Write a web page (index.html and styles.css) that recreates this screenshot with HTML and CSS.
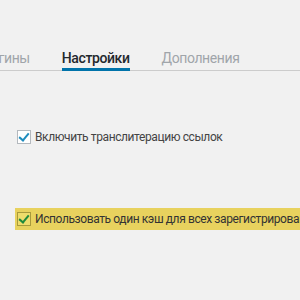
FILE: index.html
```html
<!DOCTYPE html>
<html lang="ru">
<head>
  <meta charset="UTF-8" />
  <title>Настройки</title>
  <link rel="stylesheet" href="styles.css">
</head>
<body>
  <div class="page">
    <nav class="tabs">
      <span class="tab">Плагины</span>
      <span class="tab active">Настройки</span>
      <span class="tab">Дополнения</span>
    </nav>

    <div class="options">
      <label class="option">
        <span class="check"></span>
        <span>Включить транслитерацию ссылок</span>
      </label>

      <label class="option highlight">
        <span class="check green"></span>
        <span>Использовать один кэш для всех зарегистрированных пользователей</span>
      </label>
    </div>
  </div>
</body>
</html>
```

FILE: styles.css
```css
/* --- page --- */
body {
  margin: 0;
  background-color: #f1f1f1;
  font-family: Roboto, "Noto Sans", sans-serif;
  overflow: hidden;
}

.page {
  width: 300px;
  height: 300px;
  overflow: hidden;
}

/* --- tabs --- */
.tabs {
  display: flex;
  gap: 32px;
  margin-top: 48px;
  margin-left: -26px;
  width: 400px;
  border-bottom: 1px solid #ccc;
  white-space: nowrap;
}
.tab {
  font-size: 14px;
  letter-spacing: -0.4px;
  line-height: 20px;
  color: #a0a5aa;
  border-bottom: 3px solid transparent;
  margin-bottom: -1px;
}
.tab.active {
  color: #23282d;
  font-weight: 500;
  border-bottom-color: #0073aa;
}

/* --- options --- */
.options {
  padding-top: 55px;
}
.option {
  display: flex;
  align-items: center;
  gap: 4px;
  padding: 4px 0 4px 17px;
  font-size: 12px;
  letter-spacing: -0.4px;
  line-height: 14px;
  color: #444;
  white-space: nowrap;
}
.option + .option {
  margin-top: 60px;
}
.option.highlight {
  background-color: #e8d25e;
  margin-left: 15px;
  padding-left: 2px;
  color: #333;
}

/* --- checkbox --- */
.check {
  flex-shrink: 0;
  width: 12px;
  height: 12px;
  border: 1px solid #b4b9be;
  background-color: #fff;
  position: relative;
}
.check::after {
  content: '';
  position: absolute;
  left: 3px;
  top: 0px;
  width: 4px;
  height: 8px;
  border: solid #1e8cbe;
  border-width: 0 2px 2px 0;
  transform: rotate(40deg);
}
.check.green {
  border-color: #a89a3c;
  background-color: #eedc6c;
}
.check.green::after {
  border-color: #1e8a3c;
}
```
